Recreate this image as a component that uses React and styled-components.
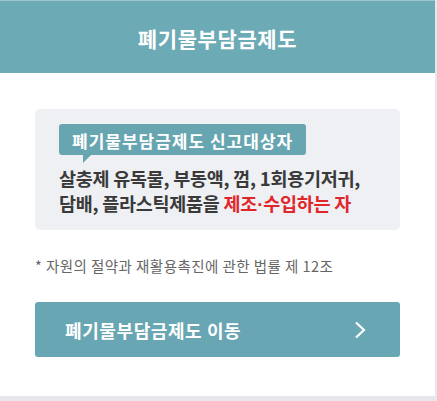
import React from 'react';
import styled, { createGlobalStyle } from 'styled-components';

const GlobalStyle = createGlobalStyle`
  html, body {
    margin: 0;
    padding: 0;
    background: #e6e7ec;
  }
  body {
    font-family: 'Noto Sans CJK KR', 'Noto Sans', sans-serif;
  }
`;

const Page = styled.div`
  width: 437px;
  height: 401px;
  background: #e6e7ec;
`;

const Card = styled.div`
  width: 435px;
  height: 396px;
  background: #fff;
  display: flex;
  flex-direction: column;
`;

const Header = styled.h2`
  margin: 0;
  height: 73px;
  display: flex;
  align-items: center;
  justify-content: center;
  background: #6caab5;
  border-top: 1px solid #9cc5cd;
  box-sizing: border-box;
  color: #fff;
  font-size: 21px;
  font-weight: 700;
  letter-spacing: 0.6px;
  padding-top: 2px;
`;

const Body = styled.div`
  padding: 36px 35px 0;
  display: flex;
  flex-direction: column;
`;

const InfoBox = styled.div`
  background: #eef0f4;
  border-radius: 5px;
  padding: 15px 20px 13px 24px;
  display: flex;
  flex-direction: column;
  align-items: flex-start;
`;

const Tag = styled.span`
  position: relative;
  display: inline-flex;
  align-items: center;
  height: 31px;
  padding: 1px 13px 0;
  box-sizing: border-box;
  border-radius: 3px;
  background: #67a6b1;
  color: #fff;
  font-size: 17px;
  font-weight: 700;
  letter-spacing: 1px;

  &::after {
    content: '';
    position: absolute;
    left: 24px;
    top: 100%;
    border-right: 8px solid transparent;
    border-top: 8px solid #67a6b1;
  }
`;

const Targets = styled.p`
  margin: 11px 0 0;
  color: #3a3a3a;
  font-size: 18.5px;
  font-weight: 700;
  line-height: 25px;
  letter-spacing: -0.25px;
  white-space: nowrap;
`;

const Highlight = styled.span`
  color: #e0262b;
`;

const Dot = styled.span`
  font-family: 'Liberation Sans', sans-serif;
  letter-spacing: 0;
`;

const Note = styled.p`
  margin: 24px 0 0;
  color: #666;
  font-size: 14.5px;
  line-height: 24px;
  letter-spacing: 0.45px;
`;

const LinkButton = styled.a`
  margin-top: 24px;
  height: 55px;
  display: flex;
  align-items: center;
  justify-content: space-between;
  padding: 0 34px 0 30px;
  border-radius: 3px;
  background: #67a6b2;
  color: #fff;
  font-size: 18px;
  font-weight: 700;
  letter-spacing: 0.6px;
  text-decoration: none;
`;

function Chevron() {
  return (
    <svg width="12" height="18" viewBox="0 0 12 18" fill="none">
      <path d="M2 1.5 L10 9 L2 16.5" stroke="#fff" strokeWidth="2.2" />
    </svg>
  );
}

export default function App() {
  return (
    <Page>
      <GlobalStyle />
      <Card>
        <Header>폐기물부담금제도</Header>
        <Body>
          <InfoBox>
            <Tag>폐기물부담금제도 신고대상자</Tag>
            <Targets>
              살충제 유독물, 부동액, 껌, 1회용기저귀,<br />
              담배, 플라스틱제품을 <Highlight>제조<Dot>·</Dot>수입하는 자</Highlight>
            </Targets>
          </InfoBox>
          <Note>* 자원의 절약과 재활용촉진에 관한 법률 제 12조</Note>
          <LinkButton href="#">
            폐기물부담금제도 이동
            <Chevron />
          </LinkButton>
        </Body>
      </Card>
    </Page>
  );
}
